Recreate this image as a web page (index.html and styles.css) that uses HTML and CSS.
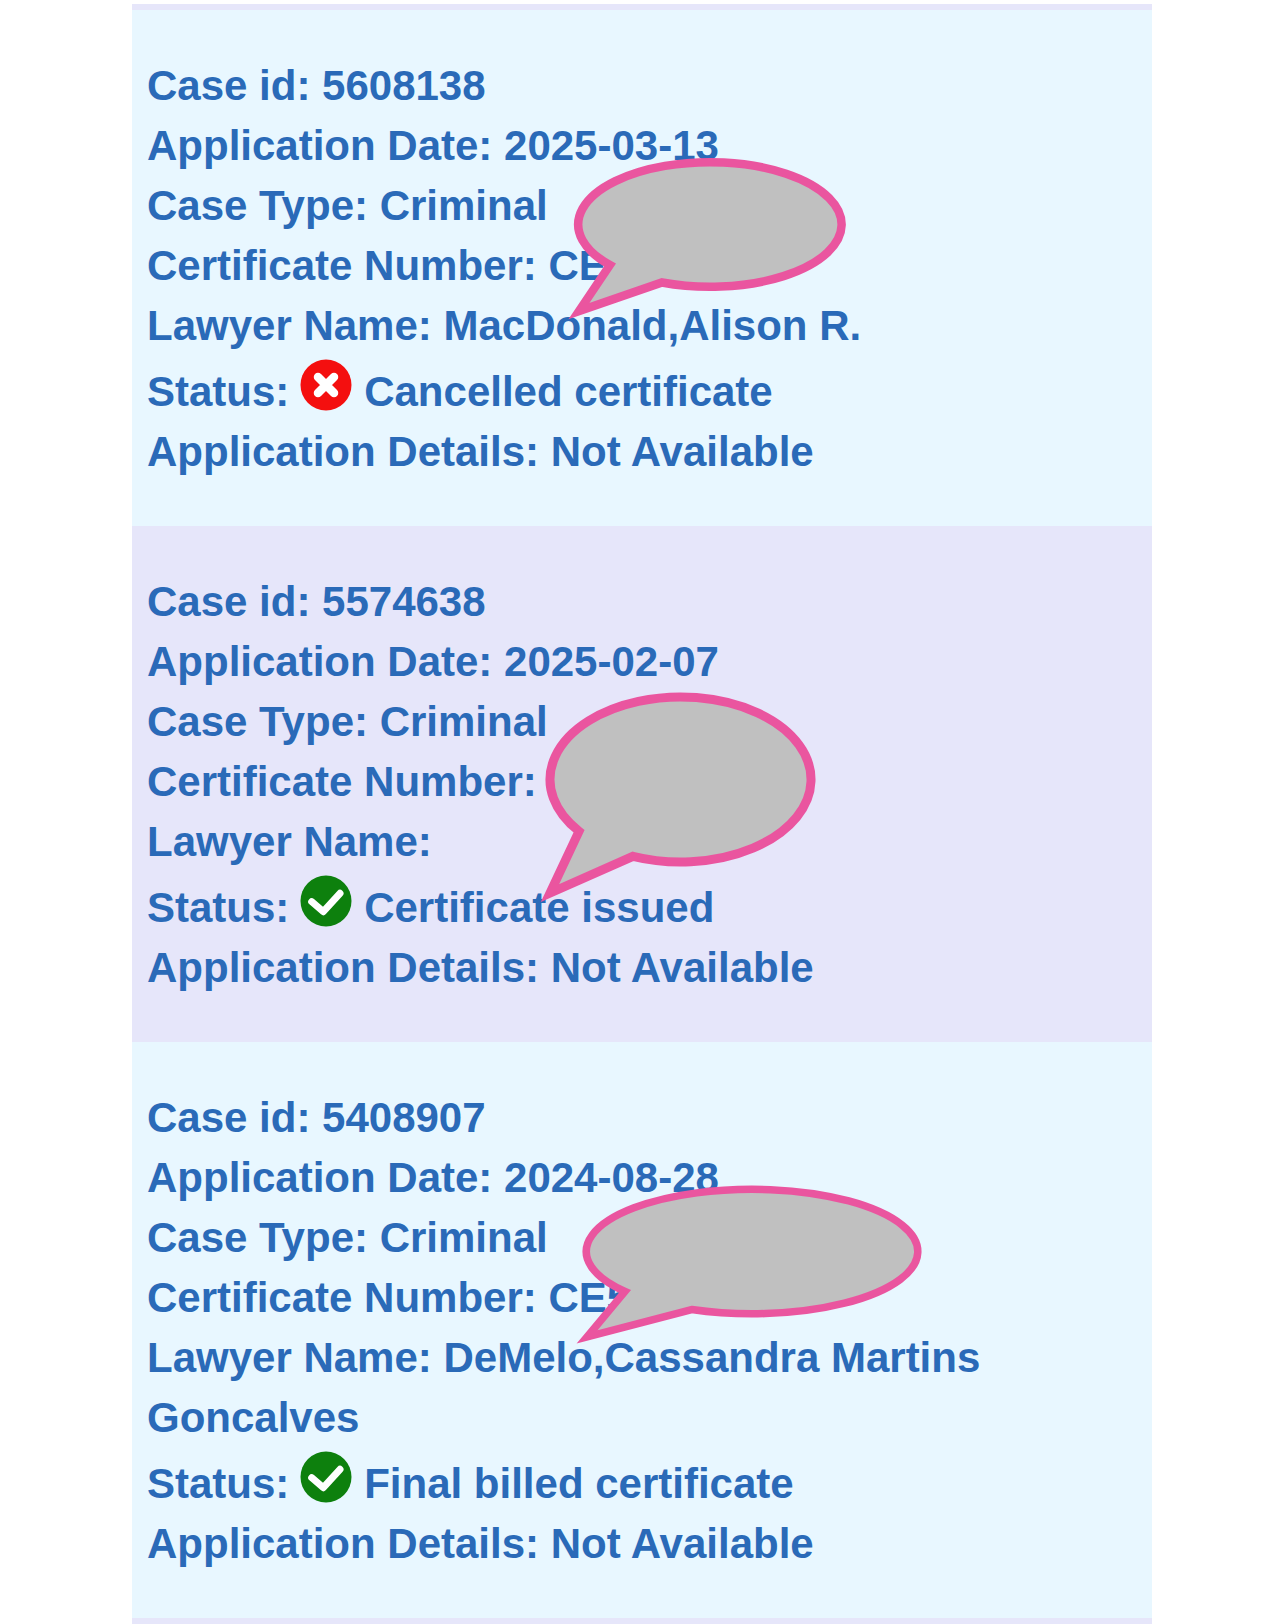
FILE: index.html
```html
<!DOCTYPE html>
<html lang="en">
<head>
<meta charset="utf-8">
<title>Cases</title>
<link rel="stylesheet" href="styles.css">
</head>
<body>
<main class="list">
  <div class="strip"></div>
  <section class="case case-light">
    <div class="line">Case id: 5608138</div>
    <div class="line">Application Date: 2025-03-13</div>
    <div class="line">Case Type: Criminal</div>
    <div class="line">Certificate Number: CE</div>
    <div class="line">Lawyer Name: MacDonald,Alison R.</div>
    <div class="line line-status">Status:
      <svg class="status-icon" viewBox="0 0 52 52"><circle cx="26" cy="26" r="25.5" fill="#f40f0f"/><path d="M18 18L34 34M34 18L18 34" fill="none" stroke="#fff" stroke-width="8.5" stroke-linecap="round"/></svg>
      Cancelled certificate</div>
    <div class="line">Application Details: Not Available</div>
    <svg class="bubble bubble-one" viewBox="0 0 290 175"><path d="M97 132.5A131.7 62.3 0 1 0 44.9 115L14 161Z"/></svg>
  </section>
  <section class="case case-dark">
    <div class="line">Case id: 5574638</div>
    <div class="line">Application Date: 2025-02-07</div>
    <div class="line">Case Type: Criminal</div>
    <div class="line">Certificate Number:</div>
    <div class="line">Lawyer Name:</div>
    <div class="line line-status">Status:
      <svg class="status-icon" viewBox="0 0 52 52"><circle cx="26" cy="26" r="25.5" fill="#0d800d"/><path d="M11.7 26.7L23.3 36.7L40 18.3" fill="none" stroke="#fff" stroke-width="7" stroke-linecap="round" stroke-linejoin="round"/></svg>
      Certificate issued</div>
    <div class="line">Application Details: Not Available</div>
    <svg class="bubble bubble-two" viewBox="0 0 280 215"><path d="M93 166.3A130.5 82.5 0 1 0 39 141.3L10 203Z"/></svg>
  </section>
  <section class="case case-light">
    <div class="line">Case id: 5408907</div>
    <div class="line">Application Date: 2024-08-28</div>
    <div class="line">Case Type: Criminal</div>
    <div class="line">Certificate Number: CE5</div>
    <div class="line">Lawyer Name: DeMelo,Cassandra Martins Goncalves</div>
    <div class="line line-status">Status:
      <svg class="status-icon" viewBox="0 0 52 52"><circle cx="26" cy="26" r="25.5" fill="#0d800d"/><path d="M11.7 26.7L23.3 36.7L40 18.3" fill="none" stroke="#fff" stroke-width="7" stroke-linecap="round" stroke-linejoin="round"/></svg>
      Final billed certificate</div>
    <div class="line">Application Details: Not Available</div>
    <svg class="bubble bubble-three" viewBox="0 0 360 170"><path d="M121.7 129.5A165.75 62.25 0 1 0 55 111.5L17 157Z"/></svg>
  </section>
  <div class="strip strip-end"></div>
</main>
</body>
</html>
```
FILE: styles.css
```css
html, body {
  margin: 0;
  padding: 0;
  background: #fff;
}
.list {
  position: relative;
  width: 1020px;
  margin: 0 auto;
  padding-top: 4px;
  font-family: "Liberation Sans", Arial, sans-serif;
  font-weight: 700;
  font-size: 42px;
  color: #2a6ab8;
}
.strip {
  height: 6px;
  background: #e6e6fa;
}
.strip-end {
  height: 6px;
}
.case {
  padding: 46px 16px 44px 15px;
}
.case-light {
  background: #e8f7ff;
}
.case-dark {
  background: #e6e6fa;
}
.line {
  line-height: 60px;
}
.line-status {
  padding-top: 3px;
}
.status-icon {
  width: 52px;
  height: 52px;
  vertical-align: -5px;
  margin: 0 1px 0 -1.5px;
}
.bubble {
  position: absolute;
  overflow: visible;
}
.bubble path {
  fill: #c0c0c0;
  stroke: #ea559f;
  stroke-miterlimit: 10;
}
.bubble-one {
  left: 433px;
  top: 150px;
  width: 290px;
  height: 175px;
  stroke-width: 8.5;
}
.bubble-two {
  left: 408px;
  top: 690px;
  width: 280px;
  height: 215px;
  stroke-width: 9;
}
.bubble-three {
  left: 438px;
  top: 1180px;
  width: 360px;
  height: 170px;
  stroke-width: 7.5;
}
```
